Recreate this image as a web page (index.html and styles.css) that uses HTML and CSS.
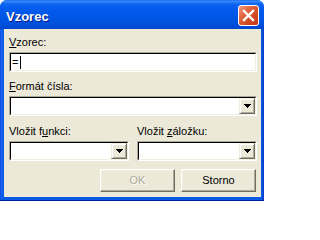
FILE: index.html
```html
<!DOCTYPE html>
<html>
<head>
<meta charset="utf-8">
<link rel="stylesheet" href="styles.css">
</head>
<body>
<div class="window">
  <div class="titlebar">
    <span class="title">Vzorec</span>
    <span class="close">
      <svg width="19" height="19" viewBox="0 0 19 19"><path d="M5 5L14 14M14 5L5 14" stroke="#fff" stroke-width="2.4" stroke-linecap="square"/></svg>
    </span>
  </div>
  <div class="frame">
    <div class="client">
      <div class="group g1">
        <div class="lbl"><u>V</u>zorec:</div>
        <div class="edit"><div class="edit-in"><span class="eq">=</span><span class="caret"></span></div></div>
      </div>
      <div class="group g2">
        <div class="lbl"><u>F</u>ormát čísla:</div>
        <div class="edit"><div class="edit-in"><span class="ddbtn"><svg width="7" height="4" viewBox="0 0 7 4"><path d="M0 0h7v1H0zM1 1h5v1H1zM2 2h3v1H2zM3 3h1v1H3z" fill="#000"/></svg></span></div></div>
      </div>
      <div class="row g3">
        <div class="group">
          <div class="lbl">Vložit f<u>u</u>nkci:</div>
          <div class="edit"><div class="edit-in"><span class="ddbtn"><svg width="7" height="4" viewBox="0 0 7 4"><path d="M0 0h7v1H0zM1 1h5v1H1zM2 2h3v1H2zM3 3h1v1H3z" fill="#000"/></svg></span></div></div>
        </div>
        <div class="group">
          <div class="lbl">Vložit <u>z</u>áložku:</div>
          <div class="edit"><div class="edit-in"><span class="ddbtn"><svg width="7" height="4" viewBox="0 0 7 4"><path d="M0 0h7v1H0zM1 1h5v1H1zM2 2h3v1H2zM3 3h1v1H3z" fill="#000"/></svg></span></div></div>
        </div>
      </div>
      <div class="buttons">
        <div class="btn disabled">OK</div>
        <div class="btn">Storno</div>
      </div>
    </div>
  </div>
</div>
</body>
</html>
```

FILE: styles.css
```css
* { box-sizing: border-box; }
html, body { margin: 0; padding: 0; background: #fff; }
body { font-family: "Liberation Sans", Arial, sans-serif; font-size: 11px; color: #000; }

.window {
  width: 264px;
  height: 201px;
  display: flex;
  flex-direction: column;
  border-radius: 7px 7px 0 0;
  overflow: hidden;
  background: #0055e5;
}

.titlebar {
  height: 29px;
  flex: none;
  display: flex;
  align-items: flex-start;
  background: linear-gradient(to bottom, #0a5fe6 0px, #3d8ffb 1px, #2b7ef7 2px, #0f66f2 4px, #055cef 8px, #0058ea 14px, #0054e2 20px, #004fd9 25px, #0046cf 29px);
}

.title {
  padding: 9px 0 0 6px;
  font-family: "Liberation Sans", Arial, sans-serif;
  font-weight: bold;
  font-size: 13px;
  line-height: 15px;
  color: #fff;
  text-shadow: 1px 1px #0a1d8a;
}

.close {
  margin: 5px 5px 0 auto;
  width: 21px;
  height: 21px;
  border: 1px solid #fff;
  border-radius: 3px;
  display: flex;
  align-items: center;
  justify-content: center;
  background: linear-gradient(135deg, #ef9d84 0%, #e2653f 35%, #d24b23 65%, #c2381a 100%);
}
.close svg { display: block; }

.frame {
  flex: 1;
  display: flex;
  padding: 0 3px 4px 4px;
  background: linear-gradient(to right, #0840d0 0, #1a66f0 1px, #0a5ae8 3px, #0a5ae8 calc(100% - 3px), #0a4ad8 calc(100% - 1px), #0830c0 100%);
  box-shadow: inset 0 -1px #0020a0;
}

.client {
  flex: 1;
  background: #ece9d8;
  padding: 7px 4px 0 5px;
  display: flex;
  flex-direction: column;
}

.group { display: flex; flex-direction: column; }
.g2 { margin-top: 8px; }
.g3 { margin-top: 9px; }

.lbl {
  line-height: 13px;
  height: 13px;
  margin-bottom: 3px;
  white-space: nowrap;
}
.lbl u { text-decoration: underline; text-underline-offset: 1px; }

.edit {
  height: 20px;
  border: 1px solid;
  border-color: #aca899 #fff #fff #aca899;
}
.edit-in {
  height: 18px;
  border: 1px solid;
  border-color: #000 #f1efe2 #f1efe2 #000;
  background: #fff;
  display: flex;
  align-items: center;
}

.eq { margin-left: 1px; line-height: 13px; }
.caret { width: 1px; height: 13px; background: #000; margin-left: 2px; }

.ddbtn {
  margin-left: auto;
  width: 16px;
  height: 16px;
  background: #ece9d8;
  border: 1px solid;
  border-color: #f1efe2 #716f64 #716f64 #f1efe2;
  box-shadow: inset 1px 1px #fff, inset -1px -1px #aca899;
  display: flex;
  align-items: center;
  justify-content: center;
  padding-left: 1px;
}
.ddbtn svg { display: block; shape-rendering: crispEdges; }

.row {
  display: flex;
  justify-content: space-between;
}
.row .group { width: 120px; }

.buttons {
  margin-top: 8px;
  display: flex;
  justify-content: flex-end;
  gap: 6px;
  padding-right: 1px;
}
.btn {
  width: 75px;
  height: 23px;
  border: 1px solid;
  border-color: #fff #716f64 #716f64 #fff;
  box-shadow: inset -1px -1px #aca899, inset 1px 1px #f1efe2;
  background: #ece9d8;
  display: flex;
  align-items: center;
  justify-content: center;
  line-height: 13px;
}
.btn.disabled {
  color: #aca899;
  text-shadow: 1px 1px #fff;
}
```
